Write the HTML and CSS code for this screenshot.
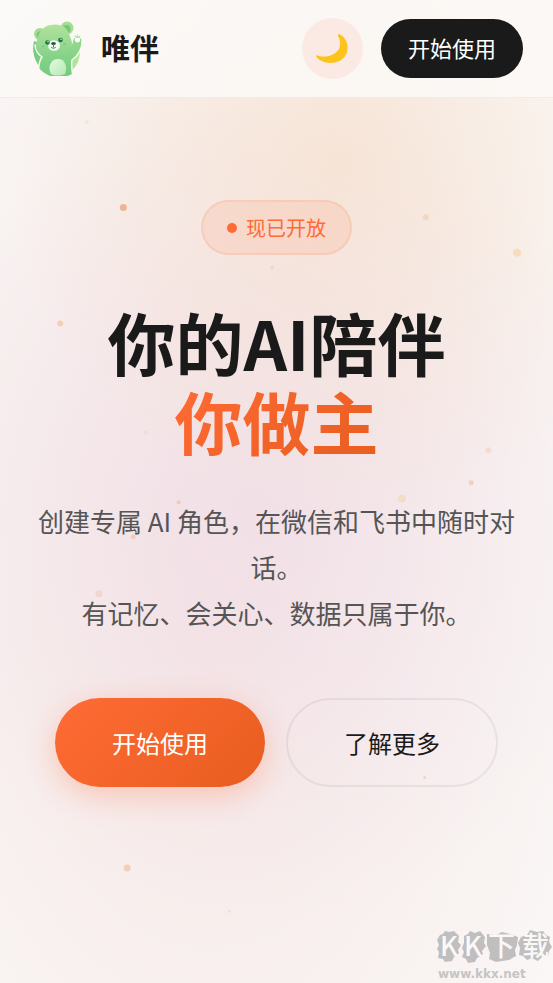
FILE: index.html
```html
<!DOCTYPE html>
<html lang="zh-CN">
<head>
  <meta charset="UTF-8">
  <meta name="viewport" content="width=device-width, initial-scale=1.0">
  <title>唯伴</title>
  <link rel="stylesheet" href="styles.css">
</head>
<body>
  <svg class="particles" aria-hidden="true">
    <circle cx="22.3%" cy="21.1%" r="3.5" fill="#eeb593" />
    <circle cx="77%" cy="22.1%" r="3" fill="#f3d6bd" />
    <circle cx="93.5%" cy="25.7%" r="4" fill="#f8dcbc" />
    <circle cx="10.9%" cy="32.9%" r="3" fill="#f3cfb5" />
    <circle cx="49.2%" cy="27.2%" r="2" fill="#f4d5c6" />
    <circle cx="42.2%" cy="35.9%" r="2.5" fill="#f2b98c" />
    <circle cx="15.7%" cy="12.4%" r="2" fill="#f3e5d8" />
    <circle cx="88.3%" cy="45.8%" r="3" fill="#f5dcd2" />
    <circle cx="85.2%" cy="49.1%" r="2.5" fill="#f1cfc1" />
    <circle cx="72.7%" cy="50.7%" r="4" fill="#f3dcc9" />
    <circle cx="32.3%" cy="51.1%" r="2" fill="#efc9ba" />
    <circle cx="24.1%" cy="54.6%" r="2.5" fill="#f3cfbb" />
    <circle cx="26.3%" cy="44%" r="2" fill="#f2dcd9" />
    <circle cx="17.9%" cy="60.4%" r="3.5" fill="#f3d6cd" />
    <circle cx="76.8%" cy="79.1%" r="1.5" fill="#f4d5c0" />
    <circle cx="23%" cy="88.3%" r="3.5" fill="#f4cfb5" />
    <circle cx="41.5%" cy="92.7%" r="1.5" fill="#f5dfcf" />
  </svg>

  <header class="navbar">
    <a class="brand" href="#">
      <svg class="brand-logo" viewBox="4 3 51 55" aria-hidden="true">
        <defs>
          <linearGradient id="head" x1="0" y1="0" x2="0" y2="1">
            <stop offset="0" stop-color="#b2e29b" />
            <stop offset="1" stop-color="#85d28a" />
          </linearGradient>
          <linearGradient id="body" x1="0" y1="0" x2="0" y2="1">
            <stop offset="0" stop-color="#9bdb90" />
            <stop offset="1" stop-color="#72cb80" />
          </linearGradient>
          <linearGradient id="disc" x1="0" y1="0" x2="1" y2="0">
            <stop offset="0" stop-color="#74cb7c" />
            <stop offset="1" stop-color="#b6e79c" />
          </linearGradient>
          <linearGradient id="belly" x1="0" y1="0" x2="1" y2="1">
            <stop offset="0" stop-color="#e4f8df" />
            <stop offset="1" stop-color="#b5e9b2" />
          </linearGradient>
          <clipPath id="round">
            <path d="M5 0h52v33A24 24 0 0 1 5 34z" />
          </clipPath>
        </defs>
        <g clip-path="url(#round)">
          <path d="M6 23C2 39 12 57 30 57c13 0 21-9 22-22L46 32 14 26z" fill="url(#disc)" />
          <path d="M7 27c0 6 3 9 7 12-3 4-4 9-3 20h34c-1-6-2-11-1-17 6-4 11-12 10-21-1-7-8-7-9 0-1 6-3 9-6 12z" fill="url(#body)" stroke="#f8fdf4" stroke-width="1.4" />
        </g>
        <circle cx="12" cy="16" r="6" fill="#a3dc92" />
        <circle cx="39" cy="10" r="6.5" fill="#a3dc92" />
        <circle cx="12.5" cy="17" r="3.8" fill="#74c878" />
        <circle cx="38.5" cy="11" r="4" fill="#74c878" />
        <path d="M23 7c9-2 16 2 18 9 1 3 3 6 3 10 0 8-8 13-18 13-11 0-18-4-18-11 0-4 1-6 2-9C12 12 16 8 23 7z" fill="url(#head)" />
        <ellipse cx="26" cy="27.5" rx="6" ry="5.3" fill="#f5fcf1" />
        <ellipse cx="25.5" cy="25.5" rx="2.4" ry="1.6" fill="#185d3d" />
        <path d="M25.5 26.5V29M23.5 29.5c1 1 3 1 4 0" fill="none" stroke="#348452" stroke-linecap="round" />
        <circle cx="19.5" cy="24.5" r="2.3" fill="#1f7546" />
        <circle cx="32.5" cy="22" r="2.3" fill="#1f7546" />
        <circle cx="20" cy="23.8" r=".7" fill="#fff" />
        <circle cx="33" cy="21.3" r=".7" fill="#fff" />
        <path d="M14 29l3-1M35 26.5l3-1" stroke="#72be80" />
        <g fill="#fff">
          <ellipse cx="49.5" cy="22" rx="2.6" ry="2.4" />
          <circle cx="46.7" cy="19.5" r="1" />
          <circle cx="48.5" cy="17.6" r="1" />
          <circle cx="50.8" cy="17.6" r="1" />
          <circle cx="52.5" cy="19.6" r="1" />
        </g>
        <path d="M23 56c-4-7 0-15 7-15s10 8 7 15c-5 2-10 2-14 0z" fill="url(#belly)" />
      </svg>
      <span class="brand-name">唯伴</span>
    </a>
    <div class="nav-actions">
      <button class="theme-toggle" type="button" aria-label="切换主题">
        <svg class="moon" viewBox="0 0 46 46" aria-hidden="true">
          <path d="M30 8C37 11 40 19 38 26 36 33 29 37 22 37 15 37 9 34 7 30 7 29 8 29 10 30 18 32 26 29 30 23 32 18 31 13 29 10 29 9 29 8 30 8z" fill="#fdc21b" />
        </svg>
      </button>
      <a class="nav-cta" href="#start">开始使用</a>
    </div>
  </header>

  <main class="hero">
    <div class="badge"><span class="badge-dot"></span>现已开放</div>
    <h1 class="title">你的AI陪伴<br><span class="title-accent">你做主</span></h1>
    <p class="description">创建专属 AI 角色，在微信和飞书中随时对话。<br>有记忆、会关心、数据只属于你。</p>
    <div class="actions">
      <a class="btn btn-primary" href="#start">开始使用</a>
      <a class="btn btn-secondary" href="#more">了解更多</a>
    </div>
  </main>

  <svg class="watermark" viewBox="0 0 118 60" aria-label="KK下载 www.kkx.net">
    <g fill="#c0bebe">
      <path d="M5 12l3-1 2-3 4 1 5-1 5 5-1 6 3 3-3 5 1 3-5 4-2 4-7 1-2-3-5-1 1-6-2-3 2-4-2-5z" />
      <path d="M29 13l4-2 2-3 5 2 5-2 5 6-1 6 2 3-4 5 1 3-6 4-2 4-7 1-2-4-4-2 2-5-2-4 2-5z" />
      <path d="M52 11l9 1 6-3 8 2 8 3-1 8-2 5 1 6-7 4-7 1-6 1-7-3 1-6-3-8z" />
      <path d="M86 14l6-2 3-5 7 2 6-1 3 4 4 2-1 5 3 5-3 4-1 5-6 1-4 4-6-3-5 2-4-4-4-1 1-7-2-5z" />
    </g>
    <g class="watermark-name">
      <text x="5" y="33">K</text>
      <text x="29" y="33">K</text>
      <text x="53" y="33">下</text>
      <text x="87" y="33">载</text>
    </g>
    <text class="watermark-url" x="3" y="55">www.kkx.net</text>
  </svg>
</body>
</html>
```

FILE: styles.css
```css
* {
  box-sizing: border-box;
}

body {
  margin: 0;
  min-height: 100vh;
  display: flex;
  flex-direction: column;
  font-family: "Noto Sans CJK SC", sans-serif;
  color: #1a1a1a;
  background:
    radial-gradient(ellipse 60% 38% at 62% 16%, rgba(245, 218, 194, .55), rgba(245, 218, 194, 0)),
    radial-gradient(ellipse 70% 42% at 48% 52%, rgba(235, 214, 232, .45), rgba(235, 214, 232, 0)),
    radial-gradient(ellipse 80% 75% at 38% 60%, rgba(243, 219, 216, .6), rgba(243, 219, 216, 0)),
    #faf8f7;
}

a {
  color: inherit;
  text-decoration: none;
}

.particles {
  position: absolute;
  top: 0;
  left: 0;
  width: 100%;
  height: 100%;
  z-index: -1;
}

.navbar {
  display: flex;
  align-items: center;
  justify-content: space-between;
  padding: 18px 30px 18px 32px;
  background: rgba(252, 249, 247, .84);
  border-bottom: 1px solid rgba(0, 0, 0, .05);
}

.brand {
  display: flex;
  align-items: center;
  gap: 18px;
}

.brand-logo {
  width: 51px;
  height: 55px;
}

.brand-name {
  padding-bottom: 4px;
  font-size: 29px;
  font-weight: 700;
  line-height: 40px;
}

.nav-actions {
  display: flex;
  align-items: center;
  gap: 18px;
}

.theme-toggle {
  display: flex;
  align-items: center;
  justify-content: center;
  width: 61px;
  height: 61px;
  padding: 0;
  border: 0;
  border-radius: 50%;
  background: #fbeae4;
}

.moon {
  width: 46px;
  height: 46px;
}

.nav-cta {
  padding: 13px 27px 15px;
  border-radius: 30px;
  background: #1a1a1a;
  color: #fff;
  font-size: 22px;
  line-height: 31px;
}

.hero {
  display: flex;
  flex-direction: column;
  align-items: center;
  padding: 102px 36px;
  text-align: center;
}

.badge {
  display: flex;
  align-items: center;
  gap: 9px;
  padding: 12px 24px;
  border: 2px solid rgba(255, 107, 53, .12);
  border-radius: 28px;
  background: rgba(255, 107, 53, .1);
  color: #ff6b35;
  font-size: 20px;
  line-height: 27px;
}

.badge-dot {
  width: 10px;
  height: 10px;
  border-radius: 50%;
  background: #ff6b35;
}

.title {
  margin: 47px 0 38px;
  font-size: 68px;
  font-weight: 700;
  line-height: 79px;
}

.title-accent {
  background: linear-gradient(135deg, #ff6b35, #e85d1f);
  -webkit-background-clip: text;
  background-clip: text;
  color: transparent;
}

.description {
  margin: 0;
  color: #555;
  font-size: 26px;
  line-height: 46px;
}

.actions {
  display: flex;
  justify-content: center;
  gap: 21px;
  margin-top: 62px;
}

.btn {
  padding: 26px 57px;
  border-radius: 45px;
  font-size: 24px;
  line-height: 37px;
  white-space: nowrap;
}

.btn-primary {
  background: linear-gradient(135deg, #ff6b35, #e85d1f);
  color: #fff;
  box-shadow: 0 8px 30px rgba(255, 107, 53, .3);
}

.btn-secondary {
  padding: 24px 56px;
  border: 2px solid rgba(0, 0, 0, .06);
}

.watermark {
  position: absolute;
  right: 0;
  bottom: 0;
  width: 118px;
  height: 60px;
}

.watermark-name {
  fill: #faf8f7;
  font-size: 27px;
  font-weight: 500;
}

.watermark-url {
  fill: #c6c4c4;
  font-family: "DejaVu Sans", sans-serif;
  font-size: 12px;
  font-weight: 700;
}
```
